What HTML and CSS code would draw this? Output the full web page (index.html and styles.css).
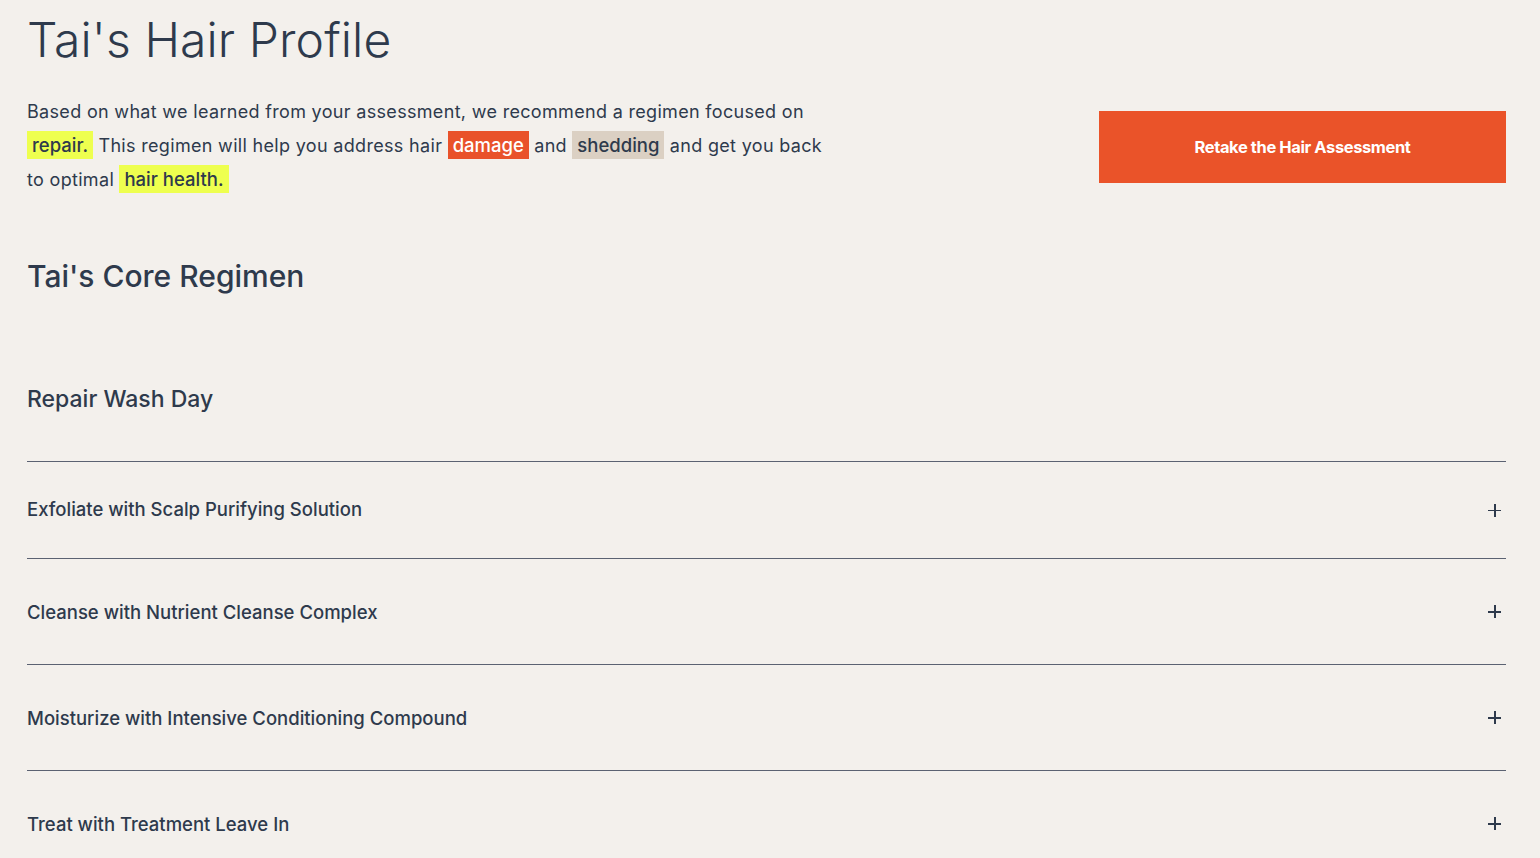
FILE: index.html
```html
<!DOCTYPE html>
<html lang="en">
<head>
	<title>Tai's Hair Profile</title>
	<meta charset="utf-8">
	<meta name="viewport" content="width=device-width, initial-scale=1">
	<link rel="stylesheet" href="styles.css">
</head>
<body>
	<div class="page">
		<h1 class="title">Tai's Hair Profile</h1>

		<div class="intro">
			<p class="summary">
				Based on what we learned from your assessment, we recommend a regimen focused on
				<span class="tag tag-yellow">repair.</span> This regimen will help you address hair
				<span class="tag tag-red">damage</span> and <span class="tag tag-sand">shedding</span>
				and get you back<br>to optimal <span class="tag tag-yellow">hair health.</span>
			</p>
			<a class="btn-retake" href="#">Retake the Hair Assessment</a>
		</div>

		<h2 class="regimen-title">Tai's Core Regimen</h2>

		<h3 class="day-title">Repair Wash Day</h3>

		<div class="steps">
			<div class="step">
				<span>Exfoliate with Scalp Purifying Solution</span>
				<span class="plus"></span>
			</div>
			<div class="step">
				<span>Cleanse with Nutrient Cleanse Complex</span>
				<span class="plus"></span>
			</div>
			<div class="step">
				<span>Moisturize with Intensive Conditioning Compound</span>
				<span class="plus"></span>
			</div>
			<div class="step">
				<span>Treat with Treatment Leave In</span>
				<span class="plus"></span>
			</div>
		</div>
	</div>
</body>
</html>
```

FILE: styles.css
```css
html, body {
	margin: 0;
	background: #f3f0ec;
}

body {
	font-family: Inter, "Noto Sans", sans-serif;
	color: #2e3a4c;
}

.page {
	padding: 0 34px 0 27px;
}

.title {
	margin: 0;
	padding-top: 10px;
	font-size: 48px;
	font-weight: 300;
	line-height: 60px;
	letter-spacing: 0.1px;
}

.intro {
	display: flex;
	justify-content: space-between;
	align-items: flex-start;
	margin-top: 25px;
}

.summary {
	margin: 0;
	width: 830px;
	font-size: 18px;
	line-height: 34px;
	font-weight: 400;
	letter-spacing: 0.32px;
}

.tag {
	display: inline-block;
	padding: 0 5px;
	line-height: 28px;
	font-size: 18.5px;
	font-weight: 500;
	letter-spacing: 0;
}

.tag-yellow {
	background: #eeff4f;
}

.tag-red {
	background: #e9522a;
	color: #fff;
}

.tag-sand {
	background: #dbd0c3;
}

.btn-retake {
	display: flex;
	align-items: center;
	justify-content: center;
	width: 407px;
	height: 72px;
	margin-top: 16px;
	background: #ea5329;
	color: #fff;
	font-size: 16.5px;
	font-weight: 700;
	letter-spacing: -0.4px;
	text-decoration: none;
}

.regimen-title {
	margin: 59px 0 0;
	font-size: 30px;
	font-weight: 500;
	line-height: 40px;
}

.day-title {
	margin: 88px 0 0;
	font-size: 23px;
	font-weight: 500;
	line-height: 30px;
}

.steps {
	margin-top: 47px;
	border-top: 1px solid #5b6272;
}

.step {
	display: flex;
	justify-content: space-between;
	align-items: center;
	height: 105px;
	border-bottom: 1px solid #5b6272;
	font-size: 18.5px;
	font-weight: 500;
}

.step:first-child {
	height: 96px;
	padding-bottom: 0;
}

.step:first-child span:first-child {
	margin-bottom: 3px;
}

.plus {
	position: relative;
	width: 13px;
	height: 13px;
	margin-right: 5px;
}

.plus:before,
.plus:after {
	content: "";
	position: absolute;
	background: #2e3a4c;
}

.plus:before {
	left: 0;
	right: 0;
	top: 6px;
	height: 1.5px;
}

.plus:after {
	top: 0;
	bottom: 0;
	left: 6px;
	width: 1.5px;
}
```
